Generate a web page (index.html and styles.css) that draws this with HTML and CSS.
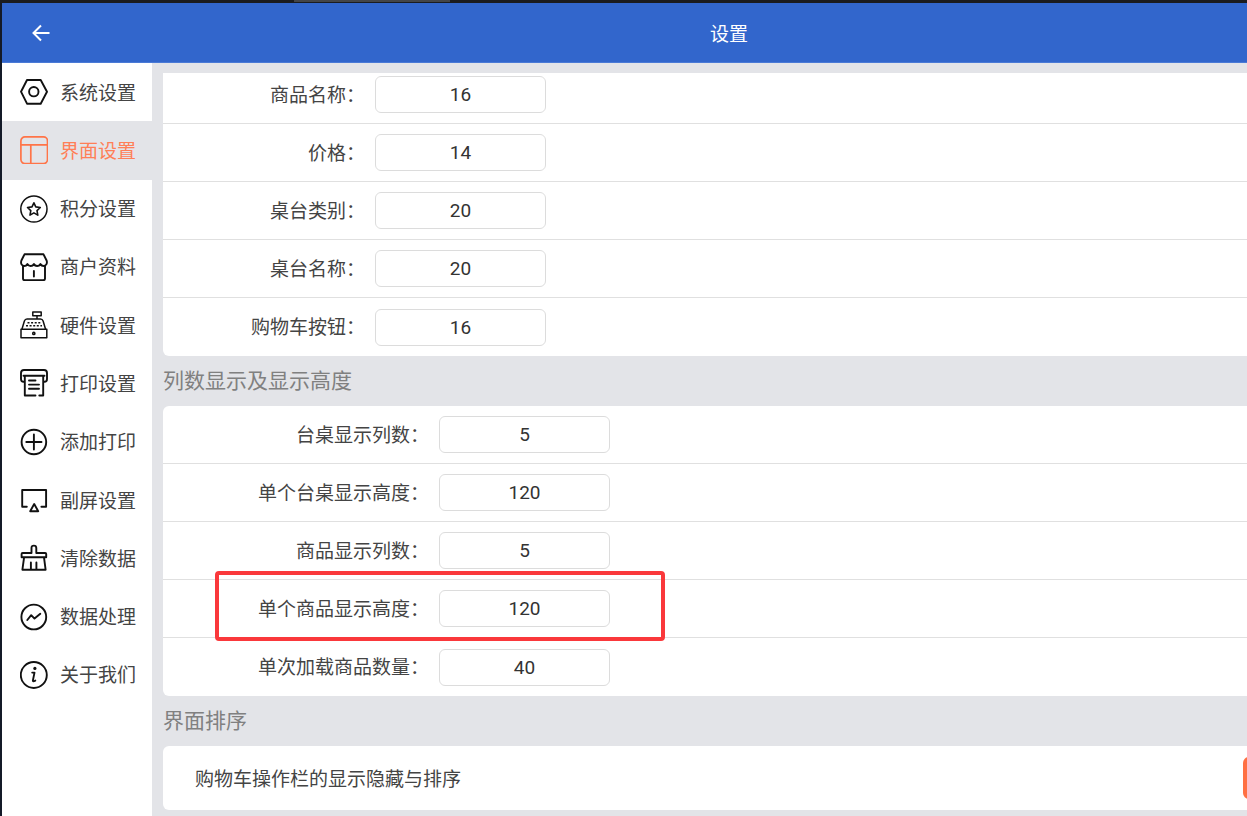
FILE: index.html
```
<!DOCTYPE html>
<html lang="zh-CN">
<head>
    <meta charset="UTF-8">
    <title>设置</title>
    <link rel="stylesheet" href="styles.css">
</head>

<body>
    <div class="window-bar"><span class="window-tab"></span></div>
    <div class="app">
        <header class="header">
            <button class="back" aria-label="返回">
                <svg width="20" height="20" viewBox="0 0 20 20"><path d="M18.500 10H2.500M10 2.500L2.500 10l7.500 7.500"/></svg>
            </button>
            <h1>设置</h1>
        </header>

        <div class="body">
            <nav class="sidebar">
                <a href="#system">
                    <svg class="icon" viewBox="0 0 28 28" stroke-width="1.9"><path d="M1 13.7L7 2h13.7L27 13.7l-6.3 12H7z"/><circle cx="13.8" cy="13.7" r="4.7"/></svg>
                    <span>系统设置</span>
                </a>
                <a href="#ui" class="active">
                    <svg class="icon" viewBox="0 0 28 28" stroke-width="1.7"><rect x="0.9" y="0.9" width="26.6" height="26.6" rx="4"/><path d="M1 8.8h26.5M10.8 8.8v18.5"/></svg>
                    <span>界面设置</span>
                </a>
                <a href="#points">
                    <svg class="icon" viewBox="0 0 28 28" stroke-width="1.5"><circle cx="13.9" cy="14" r="13.1"/><path stroke-width="1.6" d="M13.9 7.8l1.9 4.1 4.5.6-3.3 3.1.8 4.5-3.9-2.2-3.9 2.2.8-4.5-3.3-3.1 4.5-.6z"/></svg>
                    <span>积分设置</span>
                </a>
                <a href="#shop">
                    <svg class="icon" viewBox="0 0 28 28" stroke-width="1.9"><path d="M4.5 1.300h19L26.600 7.500c1 3-.6 5.500-3 5.500-1.600 0-2.600-.8-3.200-2-.7 1.300-1.900 2-3.300 2-1.500 0-2.600-.8-3.200-2-.7 1.300-1.800 2-3.300 2-1.500 0-2.500-.8-3.200-2-.7 1.300-1.700 2-3.200 2-2.400 0-3.800-2.500-2.800-5.500z"/><path d="M3 13v12.500q0 1.700 1.700 1.700h18.600q1.700 0 1.700-1.700V13M13.900 18v5.500"/></svg>
                    <span>商户资料</span>
                </a>
                <a href="#hardware">
                    <svg class="icon" viewBox="0 0 28 28" stroke-width="1.5"><rect x="12.8" y="0.9" width="8.4" height="3.8"/><path d="M17 4.700v3.100M2 18l2.400-8q.7-2 2.600-2h13.500q1.900 0 2.600 2l2.400 8"/><rect x="1" y="18.2" width="25.8" height="8.5"/><circle cx="13.8" cy="22.4" r="1.1"/><path stroke-linecap="butt" stroke-dasharray="2 1.6" d="M7.500 11.800h13M6 14.800h16"/></svg>
                    <span>硬件设置</span>
                </a>
                <a href="#print">
                    <svg class="icon" viewBox="0 0 28 28" stroke-width="1.9"><path d="M4.500 12.800H3.500Q1 12.800 1 10V4q0-3 3-3h20q3 0 3 3v6q0 2.800-2.500 2.800h-1M3.500 6.700h21M4.800 6.700V26.500H15.500M19.300 26.500h3.900V6.700M9 11.500h6.500M9 15.600h10M9 19.700h10"/></svg>
                    <span>打印设置</span>
                </a>
                <a href="#add-print">
                    <svg class="icon" viewBox="0 0 28 28" stroke-width="1.9"><circle cx="13.9" cy="14" r="12.3"/><path d="M6.300 14h15.200M13.900 6.400v15.200"/></svg>
                    <span>添加打印</span>
                </a>
                <a href="#second-screen">
                    <svg class="icon" viewBox="0 0 28 28" stroke-width="1.9"><path d="M6.800 20.800H2.200V4h23.900v16.800h-4.700M14.200 18l4 7.200h-8z"/></svg>
                    <span>副屏设置</span>
                </a>
                <a href="#clear">
                    <svg class="icon" viewBox="0 0 28 28" stroke-width="1.9"><path d="M11.500 9V4q0-2.400 2.400-2.400T16.300 4v5h8.900q1 0 1 1v3.300H1.600V10q0-1 1-1zM4.100 13.300L2.400 25.700h23.200L24 13.300M10.900 18.500v7M16.400 18.500v7"/></svg>
                    <span>清除数据</span>
                </a>
                <a href="#data">
                    <svg class="icon" viewBox="0 0 28 28" stroke-width="1.9"><circle cx="13.8" cy="14" r="12.4"/><path d="M7.300 17l3.900-4.800 3.300 3.400 5.800-4.800"/></svg>
                    <span>数据处理</span>
                </a>
                <a href="#about">
                    <svg class="icon" viewBox="0 0 28 28" stroke-width="1.9"><circle cx="13.8" cy="14" r="13"/><path d="M12.200 11.600h2.300l-1.600 7.800q-.2 1.500 2.400.2"/><circle class="dot" cx="14.9" cy="7.4" r="1.6"/></svg>
                    <span>关于我们</span>
                </a>
            </nav>

            <main class="content">
                <section class="card scrolled">
                    <div class="row"><label for="goodsName">商品名称：</label><input type="text" id="goodsName" value="16"></div>
                    <div class="row"><label for="price">价格：</label><input type="text" id="price" value="14"></div>
                    <div class="row"><label for="tableType">桌台类别：</label><input type="text" id="tableType" value="20"></div>
                    <div class="row"><label for="tableName">桌台名称：</label><input type="text" id="tableName" value="20"></div>
                    <div class="row"><label for="cartButton">购物车按钮：</label><input type="text" id="cartButton" value="16"></div>
                </section>

                <h2>列数显示及显示高度</h2>
                <section class="card wide">
                    <div class="row"><label for="tableCols">台桌显示列数：</label><input type="text" id="tableCols" value="5"></div>
                    <div class="row"><label for="tableHeight">单个台桌显示高度：</label><input type="text" id="tableHeight" value="120"></div>
                    <div class="row"><label for="goodsCols">商品显示列数：</label><input type="text" id="goodsCols" value="5"></div>
                    <div class="row marked"><label for="goodsHeight">单个商品显示高度：</label><input type="text" id="goodsHeight" value="120"></div>
                    <div class="row"><label for="loadCount">单次加载商品数量：</label><input type="text" id="loadCount" value="40"></div>
                </section>

                <h2>界面排序</h2>
                <section class="card sort">
                    <span>购物车操作栏的显示隐藏与排序</span>
                    <button class="sort-button" aria-label="排序"></button>
                </section>
            </main>
        </div>
    </div>
</body>
</html>
```

FILE: styles.css
```
*, *::after{
    box-sizing: border-box;
}
body{
    margin: 0;
    min-height: 100vh;
    display: flex;
    flex-direction: column;
    overflow: hidden;
    background: #141a28;
    color: #333;
    font-family: Roboto, "Noto Sans CJK SC", sans-serif;
    font-size: 19px;
}
button{
    border: 0;
    padding: 0;
    cursor: pointer;
}
.window-bar{
    height: 3px;
    padding-left: 294px;
    background: #1b1c1f;
}
.window-tab{
    display: block;
    width: 156px;
    height: 2px;
    background: #444547;
}

/* the app is wider than the window and runs off its right edge */
.app{
    flex: 1;
    display: flex;
    flex-direction: column;
    margin-left: 2px;
    margin-right: -209px;
}
.header{
    height: 60px;
    display: grid;
    grid-template-columns: 1fr auto 1fr;
    align-items: center;
    padding: 0 29px;
    background: #3266cc;
    border-bottom: 1px solid #4a7ad6;
    color: #fff;
}
.header h1{
    margin: 0;
    font-size: 19px;
    font-weight: 400;
}
.back{
    display: flex;
    justify-self: start;
    background: none;
}
.back svg{
    fill: none;
    stroke: #fff;
    stroke-width: 2;
}
.body{
    flex: 1;
    display: flex;
}

.sidebar{
    width: 150px;
    flex: none;
    display: grid;
    grid-auto-rows: 1fr;
    padding-bottom: 112px;
    background: #fff;
}
.sidebar a{
    display: flex;
    align-items: center;
    gap: 12px;
    padding-left: 18px;
    color: #444;
    text-decoration: none;
    white-space: nowrap;
}
.sidebar span{
    padding-bottom: 2px;
}
.sidebar .active{
    background: #e3e4e8;
    color: #ff7f57;
}
.icon{
    width: 28px;
    height: 28px;
    flex: none;
    fill: none;
    stroke: #111;
    stroke-linecap: round;
    stroke-linejoin: round;
}
.active .icon{
    stroke: #ff7448;
}
.icon .dot{
    fill: #111;
    stroke: none;
}

.content{
    flex: 1;
    padding: 10px 10px 6px 11px;
    background: #e3e4e8;
}
.content h2{
    margin: 0;
    font-size: 21px;
    font-weight: 400;
    line-height: 50px;
    color: #808080;
}
.card{
    overflow: hidden;
    background: #fff;
    border-radius: 6px;
}
.scrolled{
    border-radius: 0 0 6px 6px;
}
.scrolled .row:first-child{
    margin-top: -7px;
}
.row{
    position: relative;
    height: 58px;
    display: flex;
    align-items: center;
    gap: 10px;
    border-bottom: 1px solid #e0e0e0;
}
.row:last-child{
    border-bottom: 0;
}
.row label{
    width: 202px;
    padding-bottom: 3px;
    color: #444;
    text-align: right;
}
.wide label{
    width: 266px;
}
.row input{
    width: 171px;
    height: 37px;
    padding: 0;
    border: 1px solid #dcdcdc;
    border-radius: 6px;
    background: #fff;
    color: #333;
    font: inherit;
    text-align: center;
}
.marked::after{
    content: "";
    position: absolute;
    left: 52px;
    top: -9px;
    width: 450px;
    height: 70px;
    border: 4px solid #fa383b;
    border-radius: 4px;
    z-index: 1;
    pointer-events: none;
}
.sort{
    height: 64px;
    display: flex;
    align-items: center;
    justify-content: space-between;
    padding: 0 32px;
}
.sort span{
    padding-bottom: 2px;
    color: #444;
}
.sort-button{
    width: 171px;
    height: 42px;
    border-radius: 6px;
    background: #ff7043;
}
```
